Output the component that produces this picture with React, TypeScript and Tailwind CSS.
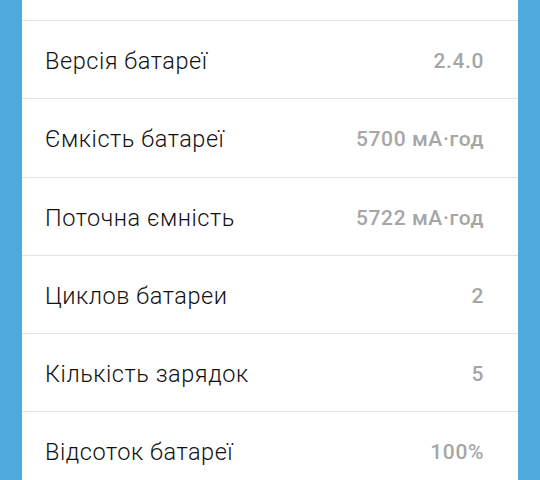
import React from "react";

const rows: [string, string, string][] = [
  ["Версія батареї", "2.4.0", "h-[78px]"],
  ["Ємкість батареї", "5700 мА·год", "h-[79px]"],
  ["Поточна ємність", "5722 мА·год", "h-[78px]"],
  ["Циклов батареи", "2", "h-[78px]"],
  ["Кількість зарядок", "5", "h-[78px]"],
  ["Відсоток батареї", "100%", "h-[78px]"],
];

export default function App() {
  return (
    <div
      className="w-[540px] h-[480px] overflow-hidden bg-[#4eaadc] px-[22px]"
      style={{ fontFamily: "Roboto, 'Noto Sans', sans-serif" }}
    >
      <div className="bg-white h-full flex flex-col">
        <div className="h-[21px] shrink-0 border-b border-[#e3e3e3]" />
        {rows.map(([label, value, h]) => (
          <div
            key={label}
            className={`${h} shrink-0 flex items-center justify-between pt-[4px] pl-[23px] pr-[34px] border-b border-[#e3e3e3]`}
          >
            <span className="text-[23.5px] font-light text-[#111111] tracking-[0.55px]">{label}</span>
            <span className="text-[21px] font-medium text-[#a6a6a6] tracking-[0.6px]">{value}</span>
          </div>
        ))}
      </div>
    </div>
  );
}
